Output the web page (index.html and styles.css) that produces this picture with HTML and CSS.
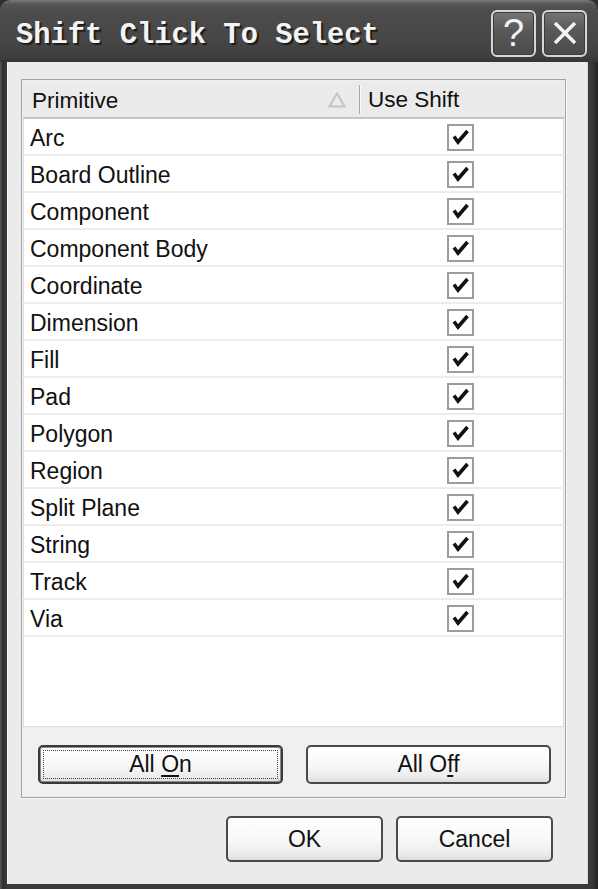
FILE: index.html
```html
<!DOCTYPE html>
<html>
<head>
<meta charset="utf-8">
<title>Shift Click To Select</title>
<link rel="stylesheet" href="styles.css">
</head>
<body>
<div class="window">
  <div class="titlebar">
    <span class="title">Shift Click To Select</span>
    <div class="tb-buttons">
      <div class="tb-btn help">?</div>
      <div class="tb-btn close">
        <svg width="26" height="26" viewBox="0 0 26 26"><path d="M3 3 L23 23 M23 3 L3 23" stroke="#f2f2f2" stroke-width="3.6" fill="none"/></svg>
      </div>
    </div>
  </div>
  <div class="client">
    <div class="panel">
      <div class="list">
        <div class="row header">
          <div class="col-name">Primitive
            <svg class="sort" width="18" height="16" viewBox="0 0 18 16"><path d="M9 1.5 L16.5 14.5 L1.5 14.5 Z" fill="none" stroke="#c4c4c4" stroke-width="2"/></svg>
          </div>
          <div class="sep"></div>
          <div class="col-check">Use Shift</div>
        </div>
        <div class="row"><div class="col-name">Arc</div><div class="col-check"><span class="cb"><svg width="23" height="23" viewBox="0 0 23 23"><path d="M5 10.5 L9 16 L18.5 5" fill="none" stroke="#111" stroke-width="3.6"/></svg></span></div></div>
        <div class="row"><div class="col-name">Board Outline</div><div class="col-check"><span class="cb"><svg width="23" height="23" viewBox="0 0 23 23"><path d="M5 10.5 L9 16 L18.5 5" fill="none" stroke="#111" stroke-width="3.6"/></svg></span></div></div>
        <div class="row"><div class="col-name">Component</div><div class="col-check"><span class="cb"><svg width="23" height="23" viewBox="0 0 23 23"><path d="M5 10.5 L9 16 L18.5 5" fill="none" stroke="#111" stroke-width="3.6"/></svg></span></div></div>
        <div class="row"><div class="col-name">Component Body</div><div class="col-check"><span class="cb"><svg width="23" height="23" viewBox="0 0 23 23"><path d="M5 10.5 L9 16 L18.5 5" fill="none" stroke="#111" stroke-width="3.6"/></svg></span></div></div>
        <div class="row"><div class="col-name">Coordinate</div><div class="col-check"><span class="cb"><svg width="23" height="23" viewBox="0 0 23 23"><path d="M5 10.5 L9 16 L18.5 5" fill="none" stroke="#111" stroke-width="3.6"/></svg></span></div></div>
        <div class="row"><div class="col-name">Dimension</div><div class="col-check"><span class="cb"><svg width="23" height="23" viewBox="0 0 23 23"><path d="M5 10.5 L9 16 L18.5 5" fill="none" stroke="#111" stroke-width="3.6"/></svg></span></div></div>
        <div class="row"><div class="col-name">Fill</div><div class="col-check"><span class="cb"><svg width="23" height="23" viewBox="0 0 23 23"><path d="M5 10.5 L9 16 L18.5 5" fill="none" stroke="#111" stroke-width="3.6"/></svg></span></div></div>
        <div class="row"><div class="col-name">Pad</div><div class="col-check"><span class="cb"><svg width="23" height="23" viewBox="0 0 23 23"><path d="M5 10.5 L9 16 L18.5 5" fill="none" stroke="#111" stroke-width="3.6"/></svg></span></div></div>
        <div class="row"><div class="col-name">Polygon</div><div class="col-check"><span class="cb"><svg width="23" height="23" viewBox="0 0 23 23"><path d="M5 10.5 L9 16 L18.5 5" fill="none" stroke="#111" stroke-width="3.6"/></svg></span></div></div>
        <div class="row"><div class="col-name">Region</div><div class="col-check"><span class="cb"><svg width="23" height="23" viewBox="0 0 23 23"><path d="M5 10.5 L9 16 L18.5 5" fill="none" stroke="#111" stroke-width="3.6"/></svg></span></div></div>
        <div class="row"><div class="col-name">Split Plane</div><div class="col-check"><span class="cb"><svg width="23" height="23" viewBox="0 0 23 23"><path d="M5 10.5 L9 16 L18.5 5" fill="none" stroke="#111" stroke-width="3.6"/></svg></span></div></div>
        <div class="row"><div class="col-name">String</div><div class="col-check"><span class="cb"><svg width="23" height="23" viewBox="0 0 23 23"><path d="M5 10.5 L9 16 L18.5 5" fill="none" stroke="#111" stroke-width="3.6"/></svg></span></div></div>
        <div class="row"><div class="col-name">Track</div><div class="col-check"><span class="cb"><svg width="23" height="23" viewBox="0 0 23 23"><path d="M5 10.5 L9 16 L18.5 5" fill="none" stroke="#111" stroke-width="3.6"/></svg></span></div></div>
        <div class="row"><div class="col-name">Via</div><div class="col-check"><span class="cb"><svg width="23" height="23" viewBox="0 0 23 23"><path d="M5 10.5 L9 16 L18.5 5" fill="none" stroke="#111" stroke-width="3.6"/></svg></span></div></div>
      </div>
      <div class="btn-area">
        <button class="btn wide focused"><span class="focus-rect"><span>All <u>O</u>n</span></span></button>
        <button class="btn wide"><span class="focus-rect none"><span>All O<u>f</u>f</span></span></button>
      </div>
    </div>
    <div class="dlg-buttons">
      <button class="btn dlg">OK</button>
      <button class="btn dlg">Cancel</button>
    </div>
  </div>
</div>
</body>
</html>
```

FILE: styles.css
```css
html, body {
  margin: 0;
  padding: 0;
  background: #2e2e2e;
}

.window {
  width: 598px;
  height: 889px;
  display: flex;
  flex-direction: column;
  background: linear-gradient(to right, #5a5a5a 0, #2f2f2f 3px, #3a3a3a 6px, #3a3a3a 592px, #222 598px);
  border-radius: 10px 10px 0 0;
  overflow: hidden;
  font-family: "Liberation Sans", Arial, sans-serif;
  color: #111;
}

.titlebar {
  height: 62px;
  flex: none;
  display: flex;
  align-items: center;
  justify-content: space-between;
  padding: 0 11px 0 16px;
  background: linear-gradient(to bottom, #7a7a7a 0, #555 4px, #4b4b4b 12px, #474747 40px, #3f3f3f 56px, #353535 62px);
  border-radius: 10px 10px 0 0;
}

.title {
  font-family: "Liberation Mono", "Courier New", monospace;
  font-weight: bold;
  font-size: 28.8px;
  color: #f4f4f4;
  text-shadow: 2px 2px 1px #1c1c1c;
  margin-top: 8px;
}

.tb-buttons {
  display: flex;
  gap: 6px;
  margin-top: 4px;
}

.tb-btn {
  width: 41px;
  height: 43px;
  border: 2px solid #d6d6d6;
  border-radius: 6px;
  background: linear-gradient(to bottom, #767676 0, #5a5a5a 40%, #4a4a4a 100%);
  display: flex;
  align-items: center;
  justify-content: center;
  color: #f2f2f2;
  box-shadow: inset 0 0 0 1px #3a3a3a;
}

.tb-btn.help {
  font-family: "Liberation Sans", Arial, sans-serif;
  font-size: 38px;
  line-height: 1;
}

.client {
  flex: 1;
  margin: 0 10px 5px 7px;
  background: #ebebeb;
  padding: 17px 22px 22px 14px;
  display: flex;
  flex-direction: column;
  box-shadow: inset 1px 0 0 #f6f6f6, inset -1px 0 0 #d8d8d8;
}

.panel {
  border: 1px solid #a3a3a3;
  padding: 1px;
  background: #f0f0f0;
  box-shadow: 1px 1px 0 #fafafa;
  display: flex;
  flex-direction: column;
}

.list {
  height: 646px;
  background: #fff;
  box-shadow: inset 0 0 0 1px #dedede;
}

.row {
  display: flex;
  align-items: center;
  height: 35px;
  border-bottom: 2px solid #ececec;
  font-size: 23px;
}

.row .col-name {
  padding-top: 3px;
}

.row .col-check {
  padding-top: 1px;
}

.row.header {
  height: 36px;
  background: #ebebeb;
  border-bottom: 2px solid #c6c6c6;
  font-size: 22.5px;
}

.col-name {
  width: 330px;
  padding-left: 7px;
  display: flex;
  align-items: center;
}

.header .col-name {
  width: 327px;
  padding-left: 9px;
}

.sort {
  margin-left: auto;
  margin-right: 13px;
  margin-top: -2px;
}

.sep {
  width: 1px;
  height: 29px;
  background: #a8a8a8;
  border-right: 1px solid #fafafa;
}

.col-check {
  flex: 1;
  display: flex;
  justify-content: center;
  padding-right: 4px;
}

.header .col-check {
  justify-content: flex-start;
  padding-left: 7px;
  padding-right: 0;
}

.cb {
  width: 23px;
  height: 23px;
  border: 2px solid #9c9c9c;
  background: #fff;
  display: flex;
}

.btn-area {
  height: 69px;
  box-sizing: border-box;
  display: flex;
  gap: 23px;
  padding: 18px 0 0 15px;
}

.btn {
  font-family: "Liberation Sans", Arial, sans-serif;
  font-size: 23px;
  color: #111;
  background: linear-gradient(to bottom, #ffffff 0, #f8f8f8 50%, #ececec 85%, #dcdcdc 100%);
  border: 2px solid #4a4a4a;
  border-radius: 5px;
  padding: 0;
  display: flex;
  align-items: center;
  justify-content: center;
}

.btn u {
  text-decoration-thickness: 2px;
  text-underline-offset: 3px;
}

.btn.wide {
  width: 245px;
  height: 39px;
}

.btn.focused {
  border: 2px solid #3a3a3a;
  box-shadow: inset 0 0 0 1px #8a8a8a;
}

.focus-rect {
  flex: 1;
  align-self: stretch;
  margin: 3px;
  border: 1px dotted #444;
  display: flex;
  align-items: center;
  justify-content: center;
}

.focus-rect.none {
  border-color: transparent;
}

.dlg-buttons {
  display: flex;
  justify-content: flex-end;
  gap: 13px;
  margin-top: 18px;
  padding-right: 13px;
}

.btn.dlg {
  width: 157px;
  height: 46px;
}
```
